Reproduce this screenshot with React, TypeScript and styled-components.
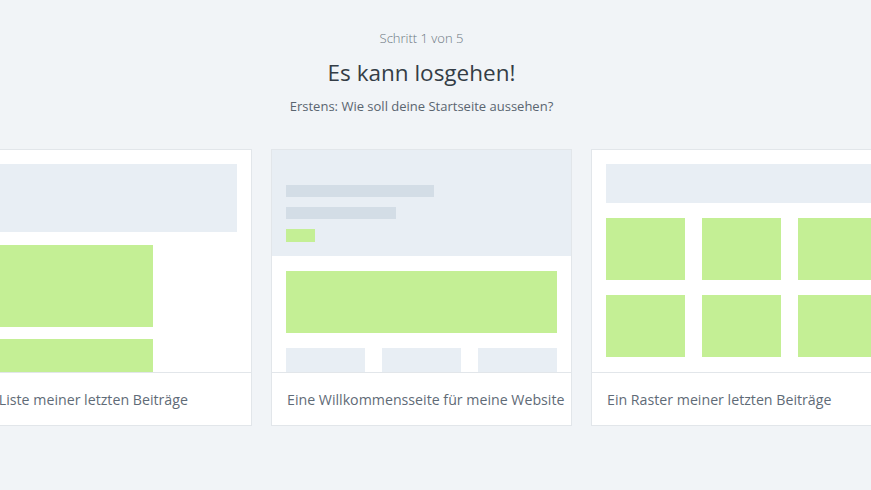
import React from "react";
import styled, { createGlobalStyle } from "styled-components";

const GlobalStyle = createGlobalStyle`
    html, body {
        margin: 0;
        padding: 0;
        background: #f1f4f7;
        overflow: hidden;
    }
    body {
        font-family: "Open Sans", "Noto Sans", sans-serif;
        color: #32373c;
    }
`;

type Layout = "list" | "welcome" | "grid";

const layouts: { id: Layout; label: string }[] = [
    { id: "list", label: "Eine Liste meiner letzten Beiträge" },
    { id: "welcome", label: "Eine Willkommensseite für meine Website" },
    { id: "grid", label: "Ein Raster meiner letzten Beiträge" },
];

const ListPreview = () => (
    <Style_preview>
        <Style_block $h={68} />
        <Style_green $h={82} $w="187px" $mt={13} />
        <Style_green $h={82} $w="187px" $mt={12} />
    </Style_preview>
);

const WelcomePreview = () => (
    <Style_preview $flush>
        <Style_hero>
            <Style_bar $w={148} />
            <Style_bar $w={110} />
            <Style_green $h={13} $w="29px" />
        </Style_hero>
        <Style_welcomeBody>
            <Style_green $h={62} />
            <Style_cols>
                <Style_block $h={40} />
                <Style_block $h={40} />
                <Style_block $h={40} />
            </Style_cols>
        </Style_welcomeBody>
    </Style_preview>
);

const GridPreview = () => (
    <Style_preview>
        <Style_block $h={39} />
        <Style_grid>
            {Array.from({ length: 6 }).map((_, i) => (
                <Style_green key={i} $h={62} />
            ))}
        </Style_grid>
    </Style_preview>
);

export default function App() {
    return (
        <>
            <GlobalStyle />
            <Style_page>
                <Style_step>Schritt 1 von 5</Style_step>
                <Style_title>Es kann losgehen!</Style_title>
                <Style_subtitle>Erstens: Wie soll deine Startseite aussehen?</Style_subtitle>
                <Style_row>
                    {layouts.map((l) => (
                        <Style_card key={l.id}>
                            {l.id === "list" && <ListPreview />}
                            {l.id === "welcome" && <WelcomePreview />}
                            {l.id === "grid" && <GridPreview />}
                            <Style_label>{l.label}</Style_label>
                        </Style_card>
                    ))}
                </Style_row>
            </Style_page>
        </>
    );
}

// content column is centred a bit left of the window centre
const Style_page = styled.div`
    width: 843px;
    height: 490px;
    text-align: center;
`;

const Style_step = styled.div`
    padding-top: 28px;
    font-size: 13px;
    line-height: 20px;
    font-weight: 300;
    color: #6c7781;
`;

const Style_title = styled.h1`
    margin: 9px 0 0;
    font-size: 22.5px;
    line-height: 32px;
    font-weight: 400;
    color: #343d46;
`;

const Style_subtitle = styled.p`
    margin: 7px 0 0;
    font-size: 13px;
    line-height: 20px;
    color: #5a6570;
`;

const Style_row = styled.div`
    display: flex;
    justify-content: center;
    gap: 19px;
    margin-top: 33px;
    text-align: left;
`;

const Style_card = styled.div`
    flex-shrink: 0;
    width: 301px;
    box-sizing: border-box;
    background: #fff;
    border: 1px solid #e2e6ea;
    display: flex;
    flex-direction: column;
`;

const Style_preview = styled.div<{ $flush?: boolean }>`
    height: 223px;
    box-sizing: border-box;
    padding: ${({ $flush }) => ($flush ? "0" : "14px")};
    overflow: hidden;
    display: flex;
    flex-direction: column;
    border-bottom: 1px solid #e2e6ea;
`;

const Style_block = styled.div<{ $h: number }>`
    flex-shrink: 0;
    height: ${({ $h }) => $h}px;
    background: #e8eef4;
`;

const Style_green = styled.div<{ $h: number; $w?: string; $mt?: number }>`
    flex-shrink: 0;
    height: ${({ $h }) => $h}px;
    width: ${({ $w }) => $w ?? "auto"};
    margin-top: ${({ $mt }) => $mt ?? 0}px;
    background: #c4ef95;
`;

const Style_hero = styled.div`
    flex-shrink: 0;
    height: 106px;
    box-sizing: border-box;
    padding: 35px 14px 0;
    background: #e8eef4;
    display: flex;
    flex-direction: column;
    gap: 10px;
`;

const Style_bar = styled.div<{ $w: number }>`
    width: ${({ $w }) => $w}px;
    height: 12px;
    background: #d3dde6;
`;

const Style_welcomeBody = styled.div`
    padding: 15px 14px 0;
    display: flex;
    flex-direction: column;
    gap: 15px;
`;

const Style_cols = styled.div`
    display: grid;
    grid-template-columns: repeat(3, 1fr);
    column-gap: 17px;
`;

const Style_grid = styled.div`
    margin-top: 15px;
    display: grid;
    grid-template-columns: repeat(3, 79px);
    column-gap: 17px;
    row-gap: 15px;
`;

const Style_label = styled.div`
    height: 52px;
    box-sizing: border-box;
    padding: 0 15px;
    display: flex;
    align-items: center;
    font-size: 14.2px;
    color: #5f6b77;
    white-space: nowrap;
`;
